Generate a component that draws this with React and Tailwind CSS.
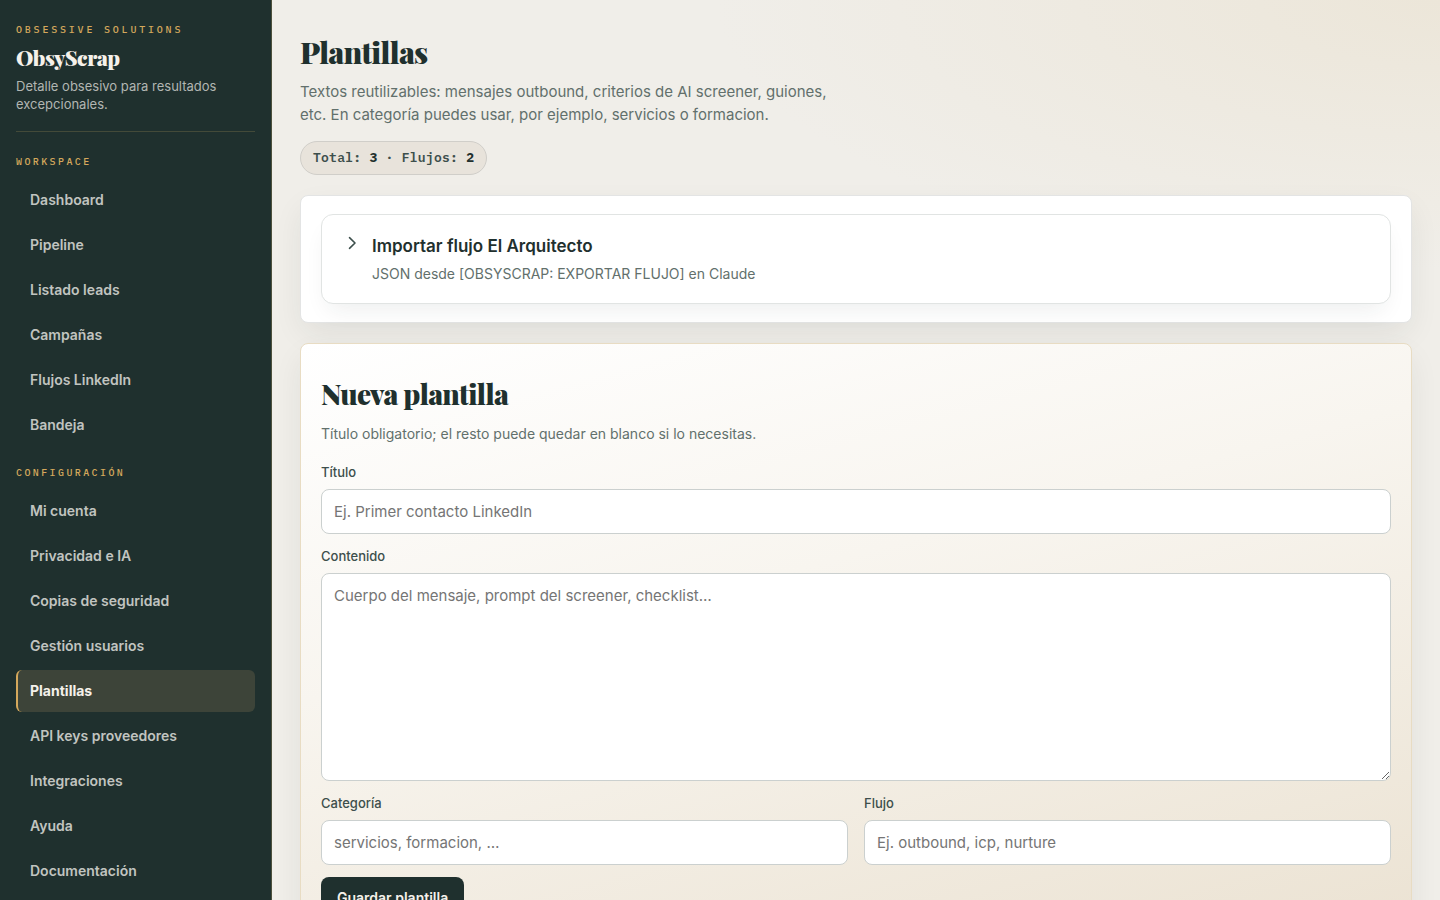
const groups = [
  { title: "Workspace", items: ["Dashboard", "Pipeline", "Listado leads", "Campañas", "Flujos LinkedIn", "Bandeja"] },
  {
    title: "Configuración",
    items: [
      "Mi cuenta",
      "Privacidad e IA",
      "Copias de seguridad",
      "Gestión usuarios",
      "Plantillas",
      "API keys proveedores",
      "Integraciones",
      "Ayuda",
      "Documentación",
    ],
  },
];

const serif = "font-['Playfair_Display','Liberation_Serif',serif] font-black";
const mono = "font-['IBM_Plex_Mono','Liberation_Mono',monospace]";
const cardShadow = "shadow-[0_12px_32px_-4px_rgba(31,48,46,0.09)]";
const field =
  "block w-full rounded-lg border border-[#cbd0cf] bg-white px-3 text-[15px] text-[#1f302e] placeholder:text-[#757575] outline-none focus:border-[#d4a85c]";
const label = "block text-[13px] leading-5 font-medium text-[#3d4f4c]";

function Sidebar({ active }) {
  return (
    <aside className="flex h-screen w-[272px] shrink-0 flex-col overflow-hidden border-r border-[#4d513d] bg-[#1f302e] px-4 pt-5">
      <header className="mb-[3px] border-b border-[#434a39] pb-[18px]">
        <p className={`${mono} text-[10px] leading-5 font-medium tracking-[0.28em] text-[#d4a85c] uppercase`}>
          Obsessive Solutions
        </p>
        <p className={`${serif} text-[21px] leading-[34px] tracking-tight text-[#f5f1ea]`}>ObsyScrap</p>
        <p className="pt-[3px] text-[13px] leading-[18px] text-[#b2b6b2]">
          Detalle obsesivo para resultados excepcionales.
        </p>
      </header>
      <nav>
        {groups.map((group) => (
          <section key={group.title} className="pt-[17px]">
            <h2 className={`${mono} text-[10px] leading-5 font-medium tracking-[0.24em] text-[#d4a85c] uppercase`}>
              {group.title}
            </h2>
            <ul className="flex flex-col gap-[3px] pt-[7px]">
              {group.items.map((item) => (
                <li key={item}>
                  <a
                    href="#"
                    className={
                      item === active
                        ? "block rounded-md border-l-2 border-[#d4a85c] bg-[#3d4439] px-3 text-sm leading-[42px] font-bold text-[#f5f1ea]"
                        : "block rounded-md border-l-2 border-transparent px-3 text-sm leading-[42px] font-semibold text-[#c1c4c0]"
                    }
                  >
                    {item}
                  </a>
                </li>
              ))}
            </ul>
          </section>
        ))}
      </nav>
    </aside>
  );
}

export default function App() {
  return (
    <div className="flex h-screen overflow-hidden bg-[#f0eee9] font-['Inter','Liberation_Sans',sans-serif] text-[#1f302e]">
      <Sidebar active="Plantillas" />
      <main className="min-w-0 flex-1 overflow-y-auto bg-[radial-gradient(ellipse_62%_30%_at_100%_0%,#ece6d9,transparent)] px-7 pt-8 pb-10 [scrollbar-width:none]">
        <header>
          <h1 className={`${serif} text-[30px] leading-10 tracking-tight`}>Plantillas</h1>
          <p className="max-w-[540px] pt-2 text-[15px] leading-[23px] text-[#62706c]">
            Textos reutilizables: mensajes outbound, criterios de AI screener, guiones, etc. En categoría puedes usar,
            por ejemplo, servicios o formacion.
          </p>
          <p
            className={`${mono} mt-[15px] inline-block rounded-full border border-[#d0cec9] bg-[#e8e3db] px-3 text-[13px] leading-8 font-semibold tracking-[0.02em] text-[#3d4f4c]`}
          >
            Total: <strong className="text-[#1f302e]">3</strong> · Flujos: <strong className="text-[#1f302e]">2</strong>
          </p>
        </header>

        <section className={`mt-5 rounded-lg border border-[#e3e4e4] bg-white px-5 py-[18px] ${cardShadow}`}>
          <details className="rounded-xl border border-[#e1e4e3] bg-white shadow-[0_12px_24px_-8px_rgba(31,48,46,0.09)]">
            <summary className="flex cursor-pointer list-none gap-3 px-[22px] py-[18px]">
              <svg
                viewBox="0 0 16 16"
                className="mt-[2px] size-4 shrink-0 text-[#3d4f4c]"
                fill="none"
                stroke="currentColor"
                strokeWidth="1.6"
                strokeLinecap="round"
                strokeLinejoin="round"
                aria-hidden="true"
              >
                <path d="M5.5 2.7 11 8l-5.5 5.3" />
              </svg>
              <span className="block">
                <span className="block text-[17px] leading-[26px] font-semibold">Importar flujo El Arquitecto</span>
                <span className="block pt-1 text-sm leading-[22px] text-[#62706c]">
                  JSON desde [OBSYSCRAP: EXPORTAR FLUJO] en Claude
                </span>
              </span>
            </summary>
          </details>
        </section>

        <section
          className={`mt-5 rounded-lg border border-[#e8dcc3] bg-[linear-gradient(165deg,#ffffff_0%,#f8f5ef_40%,#ebe2d2_100%)] px-5 pt-7 pb-6 ${cardShadow}`}
        >
          <h2 className={`${serif} text-[28px] leading-11 tracking-tight`}>Nueva plantilla</h2>
          <p className="pt-[7px] text-sm leading-[22px] text-[#62706c]">
            Título obligatorio; el resto puede quedar en blanco si lo necesitas.
          </p>
          <form className="flex flex-col gap-3 pt-[17px]">
            <div>
              <label htmlFor="titulo" className={label}>Título</label>
              <input id="titulo" className={`${field} mt-[7px] h-[45px]`} placeholder="Ej. Primer contacto LinkedIn" />
            </div>
            <div>
              <label htmlFor="contenido" className={label}>Contenido</label>
              <textarea
                id="contenido"
                className={`${field} mt-[7px] h-52 resize-y py-[10px] leading-6`}
                placeholder="Cuerpo del mensaje, prompt del screener, checklist…"
              />
            </div>
            <div className="grid grid-cols-2 gap-4">
              <div>
                <label htmlFor="categoria" className={label}>Categoría</label>
                <input id="categoria" className={`${field} mt-[7px] h-[45px]`} placeholder="servicios, formacion, …" />
              </div>
              <div>
                <label htmlFor="flujo" className={label}>Flujo</label>
                <input id="flujo" className={`${field} mt-[7px] h-[45px]`} placeholder="Ej. outbound, icp, nurture" />
              </div>
            </div>
            <button
              type="button"
              className="self-start rounded-lg bg-[#1f302e] px-4 text-sm leading-[42px] font-semibold text-[#f5f1ea]"
            >
              Guardar plantilla
            </button>
          </form>
        </section>
      </main>
    </div>
  );
}
